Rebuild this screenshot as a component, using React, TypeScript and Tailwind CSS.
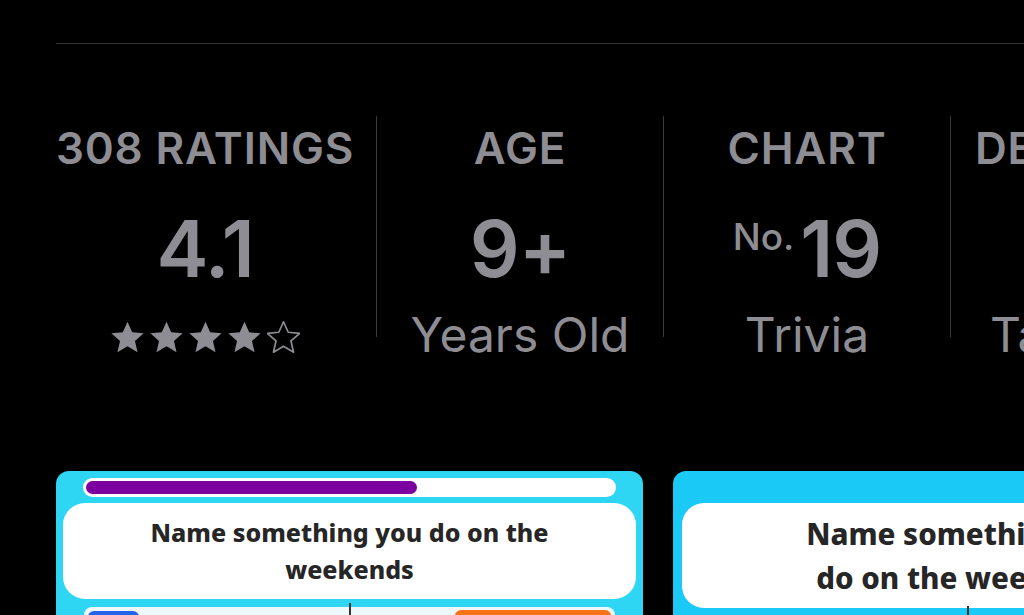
import React from 'react';

const STAR = 'M12 1.6l3.06 6.9 7.5.72-5.66 4.98 1.66 7.36L12 17.72l-6.56 3.84 1.66-7.36L1.44 9.22l7.5-.72z';

const Stars: React.FC<{ filled: number }> = ({ filled }) => (
    <div className="flex items-center gap-[6px]">
        {[0, 1, 2, 3, 4].map((i) => (
            <svg key={i} width="33" height="32" viewBox="1.2 1.2 21.6 20.8">
                {i < filled ? (
                    <path d={STAR} fill="#8e8d93" />
                ) : (
                    <path d={STAR} fill="none" stroke="#8e8d93" strokeWidth="1.1" strokeLinejoin="round" />
                )}
            </svg>
        ))}
    </div>
);

type Stat = {
    label: string;
    value: React.ReactNode;
    sub: React.ReactNode;
    width: string;
};

const Divider: React.FC = () => <div className="w-px h-[221px] shrink-0 bg-[#3a3a3c]" />;

const StatCell: React.FC<{ stat: Stat }> = ({ stat }) => (
    <div className={`${stat.width} shrink-0 flex flex-col items-center text-[#8e8d93] whitespace-nowrap`}>
        <div className="mt-[10px] h-[44px] text-[44px] leading-[44px] font-semibold tracking-[0.8px]">{stat.label}</div>
        <div className="mt-[40px] h-[78px] text-[78px] leading-[78px] font-semibold tracking-[-1px] flex items-start">{stat.value}</div>
        <div className="mt-[23px] h-[48px] text-[48px] leading-[48px] flex items-center">{stat.sub}</div>
    </div>
);

const QuestionCard: React.FC<{ bg: string; big?: boolean }> = ({ bg, big }) => (
    <div className={`${bg} w-[587px] h-[180px] shrink-0 rounded-[13px] flex flex-col`}>
        {big ? (
            <div className="h-[32px]" />
        ) : (
            <div className="mt-[7px] mx-[27px] h-[19px] rounded-full bg-white p-[3px]">
                <div className="h-full w-[331px] rounded-full bg-[#7b009f]" />
            </div>
        )}
        <div
            className={`${big ? 'mx-[9px] h-[105px] text-[29.5px] leading-[44px]' : 'mt-[6px] mx-[7px] h-[96px] text-[25px] leading-[37px]'} bg-white rounded-[22px] flex flex-col items-center justify-center text-center font-extrabold text-[#262626]`}
            style={{ fontFamily: '"Noto Sans", sans-serif' }}
        >
            {big ? (
                <>
                    <span>Name something you</span>
                    <span>do on the weekends</span>
                </>
            ) : (
                <>
                    <span>Name something you do on the</span>
                    <span>weekends</span>
                </>
            )}
        </div>
        {big ? (
            <div className="relative h-[20px]">
                <div className="absolute left-[294px] top-[-2px] w-[2px] h-[12px] bg-[#333]" />
            </div>
        ) : (
            <div className="relative mt-[8px] mx-[28px] h-[20px] rounded-t-[8px] bg-[#eef8fb]">
                <div className="absolute left-[4px] top-[4px] w-[51px] h-[16px] rounded-t-[6px] bg-[#2563eb]" />
                <div className="absolute left-[265px] top-[-4px] w-[2px] h-[24px] bg-[#333]" />
                <div className="absolute left-[371px] top-[3px] w-[156px] h-[17px] rounded-t-[6px] bg-[#f97316]" />
            </div>
        )}
    </div>
);

const App: React.FC = () => {
    const stats: Stat[] = [
        {
            label: '308 RATINGS',
            value: '4.1',
            sub: <div className="pt-[3px]"><Stars filled={4} /></div>,
            width: 'w-[298px]',
        },
        { label: 'AGE', value: '9+', sub: 'Years Old', width: 'w-[286px]' },
        {
            label: 'CHART',
            value: (
                <>
                    <span className="mt-[8px] text-[37px] leading-[37px] font-medium tracking-normal mr-[6px]">No.</span>
                    <span>19</span>
                </>
            ),
            sub: 'Trivia',
            width: 'w-[286px]',
        },
    ];

    return (
        <div
            className="w-[1024px] h-[615px] bg-black overflow-hidden pl-[56px]"
            style={{ fontFamily: 'Inter, "Liberation Sans", sans-serif' }}
        >
            <div className="pt-[43px]">
                <div className="h-px bg-[#363638]" />
            </div>

            <div className="mt-[72px] flex items-start h-[250px]">
                <StatCell stat={stats[0]} />
                <div className="w-[22px] shrink-0" />
                <Divider />
                <StatCell stat={stats[1]} />
                <Divider />
                <StatCell stat={stats[2]} />
                <Divider />
                <div className="pl-[24px] shrink-0 text-[#8e8d93] whitespace-nowrap">
                    <div className="mt-[10px] h-[44px] text-[44px] leading-[44px] font-semibold tracking-[0.8px]">DEVELOPER</div>
                    <div className="mt-[141px] ml-[15px] h-[48px] text-[48px] leading-[48px]">Tasty Games</div>
                </div>
            </div>

            <div className="mt-[105px] flex gap-[30px]">
                <QuestionCard bg="bg-[#2fd6f3]" />
                <QuestionCard bg="bg-[#1bc9f7]" big />
            </div>
        </div>
    );
};

export default App;
